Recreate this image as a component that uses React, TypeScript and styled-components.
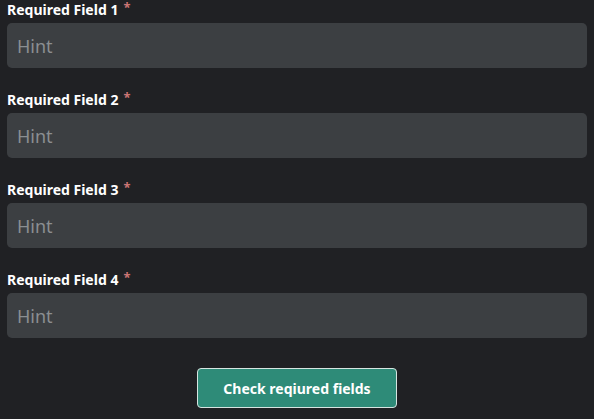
import React from "react";
import styled, { createGlobalStyle } from "styled-components";

const Global = createGlobalStyle`
  html, body { margin: 0; padding: 0; background: #202124; }
  body { font-family: "Noto Sans", "Open Sans", sans-serif; }
`;

const Page = styled.div`
  width: 594px;
  height: 419px;
  box-sizing: border-box;
  padding: 0 7px;
  background: #202124;
  display: flex;
  flex-direction: column;
`;

const Field = styled.div`
  display: flex;
  flex-direction: column;
  margin-bottom: 22px;
`;

const Label = styled.label`
  height: 20px;
  line-height: 20px;
  margin-bottom: 3px;
  font-size: 14px;
  font-weight: 700;
  color: #ffffff;
  white-space: nowrap;
`;

const Star = styled.span`
  display: inline-block;
  color: #cc7474;
  font-size: 13px;
  line-height: 16px;
  height: 16px;
  margin-left: 5px;
  vertical-align: top;
  position: relative;
  top: -1px;
`;

const Input = styled.input`
  height: 45px;
  box-sizing: border-box;
  border: none;
  outline: none;
  border-radius: 5px;
  background: #3c3f42;
  padding: 0 10px;
  font-family: "Noto Sans", "Open Sans", sans-serif;
  font-size: 18px;
  color: #ffffff;
  &::placeholder { color: #8b8e91; }
`;

const Actions = styled.div`
  display: flex;
  justify-content: center;
  margin-top: 8px;
`;

const Button = styled.button`
  width: 200px;
  height: 40px;
  border: 1px solid #d6e5e1;
  border-radius: 4px;
  background: #2e8b78;
  color: #ffffff;
  font-family: "Noto Sans", "Open Sans", sans-serif;
  font-size: 14px;
  font-weight: 700;
  cursor: pointer;
`;

export default function App() {
  return (
    <>
      <Global />
      <Page>
        {[1, 2, 3, 4].map((n) => (
          <Field key={n}>
            <Label>
              Required Field {n}
              <Star>*</Star>
            </Label>
            <Input placeholder="Hint" />
          </Field>
        ))}
        <Actions>
          <Button>Check reqiured fields</Button>
        </Actions>
      </Page>
    </>
  );
}
